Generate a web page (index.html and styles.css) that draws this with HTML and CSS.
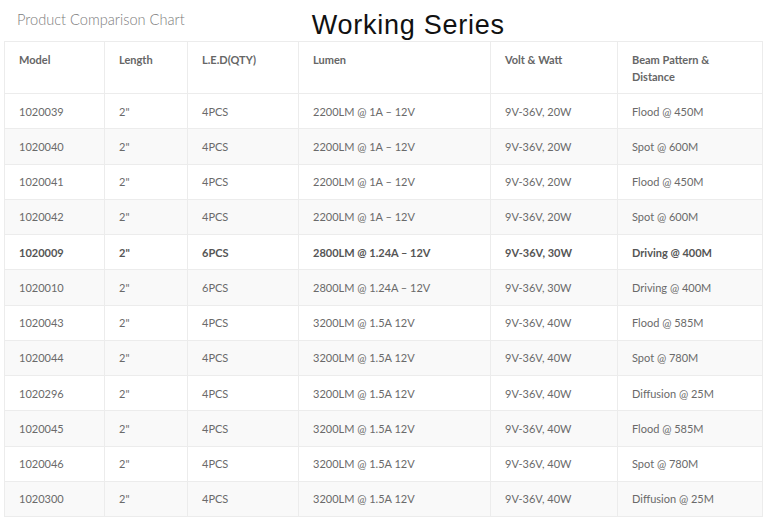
FILE: index.html
```html
<!DOCTYPE html>
<html>
<head>
<meta charset="utf-8">
<link rel="stylesheet" href="styles.css">
</head>
<body>
<div class="page">
  <div class="titlebar">
    <span class="subtitle">Product Comparison Chart</span>
    <span class="title">Working Series</span>
  </div>
  <table class="chart">
    <colgroup>
      <col class="c1"><col class="c2"><col class="c3"><col class="c4"><col class="c5"><col class="c6">
    </colgroup>
    <thead>
      <tr>
        <th>Model</th><th>Length</th><th>L.E.D(QTY)</th><th>Lumen</th><th>Volt &amp; Watt</th><th>Beam Pattern &amp;<br>Distance</th>
      </tr>
    </thead>
    <tbody>
      <tr><td>1020039</td><td>2"</td><td>4PCS</td><td>2200LM @ 1A – 12V</td><td>9V-36V, 20W</td><td>Flood @ 450M</td></tr>
      <tr><td>1020040</td><td>2"</td><td>4PCS</td><td>2200LM @ 1A – 12V</td><td>9V-36V, 20W</td><td>Spot @ 600M</td></tr>
      <tr><td>1020041</td><td>2"</td><td>4PCS</td><td>2200LM @ 1A – 12V</td><td>9V-36V, 20W</td><td>Flood @ 450M</td></tr>
      <tr><td>1020042</td><td>2"</td><td>4PCS</td><td>2200LM @ 1A – 12V</td><td>9V-36V, 20W</td><td>Spot @ 600M</td></tr>
      <tr class="strong"><td>1020009</td><td>2"</td><td>6PCS</td><td>2800LM @ 1.24A – 12V</td><td>9V-36V, 30W</td><td>Driving @ 400M</td></tr>
      <tr><td>1020010</td><td>2"</td><td>6PCS</td><td>2800LM @ 1.24A – 12V</td><td>9V-36V, 30W</td><td>Driving @ 400M</td></tr>
      <tr><td>1020043</td><td>2"</td><td>4PCS</td><td>3200LM @ 1.5A 12V</td><td>9V-36V, 40W</td><td>Flood @ 585M</td></tr>
      <tr><td>1020044</td><td>2"</td><td>4PCS</td><td>3200LM @ 1.5A 12V</td><td>9V-36V, 40W</td><td>Spot @ 780M</td></tr>
      <tr><td>1020296</td><td>2"</td><td>4PCS</td><td>3200LM @ 1.5A 12V</td><td>9V-36V, 40W</td><td>Diffusion @ 25M</td></tr>
      <tr><td>1020045</td><td>2"</td><td>4PCS</td><td>3200LM @ 1.5A 12V</td><td>9V-36V, 40W</td><td>Flood @ 585M</td></tr>
      <tr><td>1020046</td><td>2"</td><td>4PCS</td><td>3200LM @ 1.5A 12V</td><td>9V-36V, 40W</td><td>Spot @ 780M</td></tr>
      <tr><td>1020300</td><td>2"</td><td>4PCS</td><td>3200LM @ 1.5A 12V</td><td>9V-36V, 40W</td><td>Diffusion @ 25M</td></tr>
    </tbody>
  </table>
</div>
</body>
</html>
```

FILE: styles.css
```css
html, body {
  margin: 0;
  padding: 0;
  background: #ffffff;
}

.page {
  width: 768px;
  height: 524px;
  overflow: hidden;
  padding: 0 0 0 4px;
  box-sizing: border-box;
}

.titlebar {
  height: 41px;
  display: flex;
  align-items: flex-start;
}

.subtitle {
  margin: 10px 0 0 13px;
  font-family: Lato, "Open Sans", sans-serif;
  font-weight: 300;
  font-size: 14.6px;
  line-height: 20px;
  color: #7c7c7c;
}

.title {
  margin: 9px 0 0 127px;
  font-family: "Liberation Sans", Arial, sans-serif;
  font-size: 27px;
  letter-spacing: 0.75px;
  line-height: 32px;
  color: #111111;
}

.chart {
  width: 758px;
  table-layout: fixed;
  border-collapse: collapse;
  font-family: Lato, "Open Sans", sans-serif;
  font-size: 11px;
  color: #6a6a6a;
  border: 1px solid #ececec;
}

.c1 { width: 100px; }
.c2 { width: 83px; }
.c3 { width: 111px; }
.c4 { width: 192px; }
.c5 { width: 127px; }
.c6 { width: 145px; }

.chart th {
  text-align: left;
  vertical-align: top;
  font-weight: 700;
  color: #666666;
  line-height: 17px;
  padding: 9px 12px 8px 14px;
  height: 34px;
  border: 1px solid #ececec;
}

.chart td {
  height: 34.25px;
  padding: 0 12px 0 14px;
  line-height: 17px;
  vertical-align: middle;
  border: 1px solid #ececec;
  white-space: nowrap;
}

.chart tbody tr:nth-child(even) td {
  background: #f9f9f9;
}

.chart tr.strong td {
  font-weight: 700;
  color: #555555;
}
```
